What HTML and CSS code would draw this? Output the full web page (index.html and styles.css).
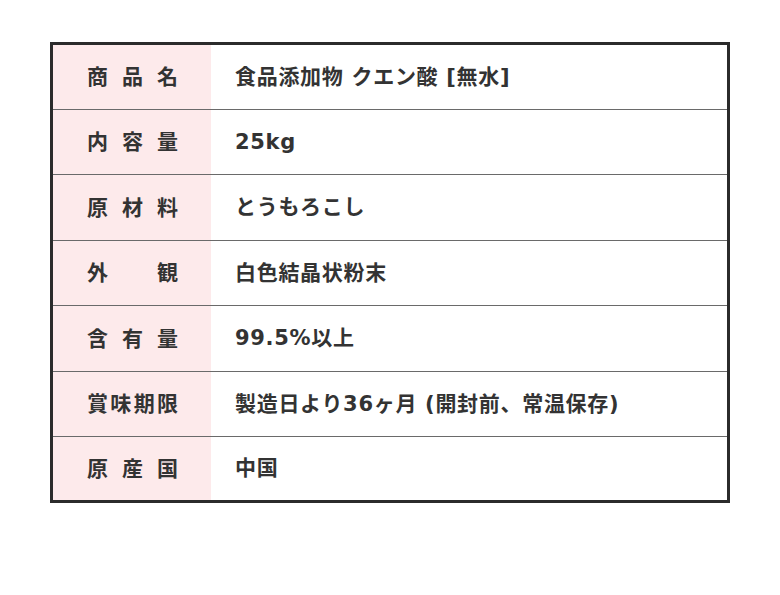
FILE: index.html
```html
<!DOCTYPE html>
<html lang="ja">
<head>
<meta charset="utf-8">
<link rel="stylesheet" href="styles.css">
</head>
<body>
<div class="spec">
  <div class="row r1"><div class="label"><span>商</span><span>品</span><span>名</span></div><div class="value">食品添加物 クエン酸 [無水]</div></div>
  <div class="row r2"><div class="label"><span>内</span><span>容</span><span>量</span></div><div class="value">25kg</div></div>
  <div class="row r3"><div class="label"><span>原</span><span>材</span><span>料</span></div><div class="value">とうもろこし</div></div>
  <div class="row r4"><div class="label"><span>外</span><span>観</span></div><div class="value">白色結晶状粉末</div></div>
  <div class="row r5"><div class="label"><span>含</span><span>有</span><span>量</span></div><div class="value">99.5%以上</div></div>
  <div class="row r6"><div class="label"><span>賞</span><span>味</span><span>期</span><span>限</span></div><div class="value">製造日より36ヶ月 (開封前、常温保存)</div></div>
  <div class="row r7"><div class="label"><span>原</span><span>産</span><span>国</span></div><div class="value">中国</div></div>
</div>
</body>
</html>
```
FILE: styles.css
```css
html, body {
  margin: 0;
  padding: 0;
  background: #ffffff;
}
body {
  padding: 42px 0 0 50px;
  font-family: "Noto Sans CJK JP", "Noto Sans", sans-serif;
  color: #333333;
}
.spec {
  width: 674px;
  border: 3px solid #2b2b2b;
  display: flex;
  flex-direction: column;
}
.row {
  display: grid;
  grid-template-columns: 158px 1fr;
  height: 65px;
  border-top: 1px solid #6a6a6a;
  box-sizing: border-box;
}
.row.r1 {
  border-top: none;
  height: 64px;
}
.row.r3,
.row.r5 {
  height: 66px;
}
.row.r7 {
  height: 64px;
}
.label {
  background: #fdeaeb;
  padding: 0 33px 3px 34px;
  display: flex;
  justify-content: space-between;
  align-items: center;
  font-size: 21px;
  line-height: 1;
  font-weight: 700;
}
.value {
  padding-left: 24px;
  display: flex;
  align-items: center;
  font-family: "DejaVu Sans", "Noto Sans CJK JP", sans-serif;
  font-size: 21px;
  line-height: 1;
  letter-spacing: 0.7px;
  font-weight: 700;
  white-space: nowrap;
}
```
